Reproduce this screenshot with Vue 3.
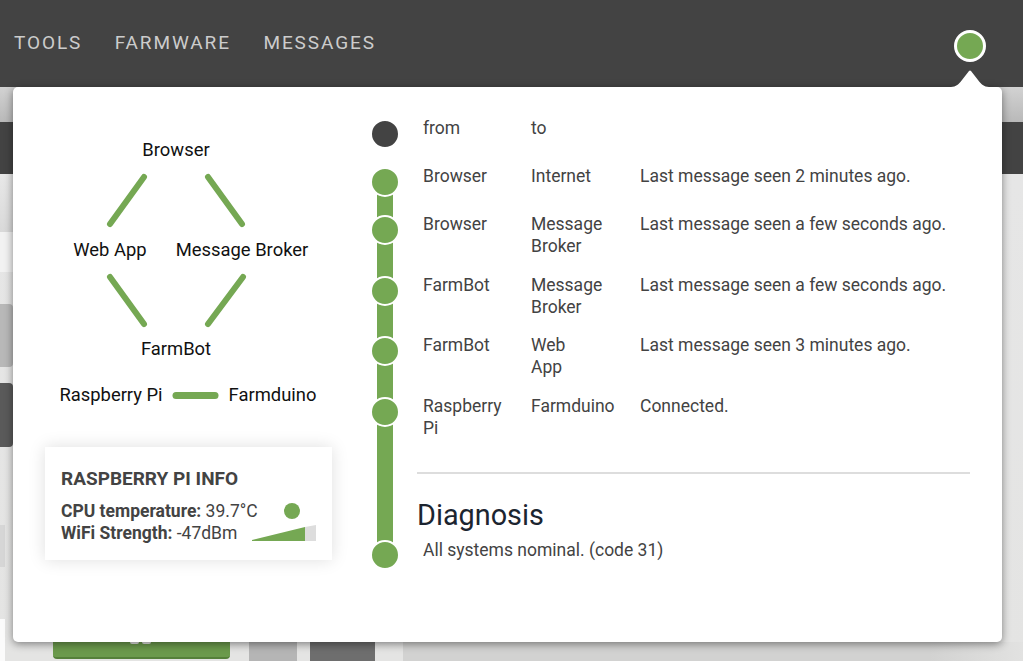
<script setup>
const rows = [
  { from: 'Browser', to: 'Internet', msg: 'Last message seen 2 minutes ago.' },
  { from: 'Browser', to: 'Message Broker', msg: 'Last message seen a few seconds ago.' },
  { from: 'FarmBot', to: 'Message Broker', msg: 'Last message seen a few seconds ago.' },
  { from: 'FarmBot', to: 'Web App', msg: 'Last message seen 3 minutes ago.' },
  { from: 'Raspberry Pi', to: 'Farmduino', msg: 'Connected.' },
]
</script>

<template>
  <div class="page">
    <header class="nav">
      <a>TOOLS</a>
      <a>FARMWARE</a>
      <a>MESSAGES</a>
      <span class="status"></span>
    </header>
    <div class="sub-a"></div>
    <div class="sub-b"></div>
    <div class="sub-rest">
      <i class="bg-left l1"></i>
      <i class="bg-left l2"></i>
      <i class="bg-left l3"></i>
      <i class="bg-left l4"></i>
      <i class="bg-left l5"></i>
      <i class="bg-left l6"></i>
      <i class="bg-bottom b1"><b class="nub"></b><b class="nub"></b></i>
      <i class="bg-bottom b2"></i>
      <i class="bg-bottom b3"></i>
      <i class="bg-bottom b4"></i>
    </div>

    <section class="popup">
      <svg class="arrow" width="40" height="20" viewBox="0 0 40 20">
        <path d="M1 19 C6 19 9 16 12 12 L19 3 Q20 2 21 3 L28 12 C31 16 34 19 39 19 L39 20 L1 20 Z" fill="#fff" />
      </svg>
      <div class="left">
        <div class="diagram">
          <svg class="links" width="320" height="300" viewBox="0 0 320 300">
            <g stroke="#75a853" stroke-width="6" stroke-linecap="round">
              <line x1="65" y1="132" x2="99" y2="85" />
              <line x1="163" y1="85" x2="197" y2="132" />
              <line x1="65" y1="185" x2="99" y2="232" />
              <line x1="163" y1="232" x2="198" y2="185" />
              <line x1="131" y1="303.5" x2="170" y2="303.5" stroke-width="7" />
            </g>
          </svg>
          <span class="node n1">Browser</span>
          <span class="node n2">Web App</span>
          <span class="node n3">Message Broker</span>
          <span class="node n4">FarmBot</span>
          <span class="node n5">Raspberry Pi</span>
          <span class="node n6">Farmduino</span>
        </div>
        <div class="card">
          <h4>RASPBERRY PI INFO</h4>
          <div class="info">
            <p><b>CPU temperature:</b> 39.7°C</p>
            <span class="temp"></span>
          </div>
          <div class="info">
            <p><b>WiFi Strength:</b> -47dBm</p>
            <svg width="64" height="16" viewBox="0 0 64 16">
              <path d="M53 2 L64 0 L64 16 L53 16 Z" fill="#ddd" />
              <path d="M0 15 L53 2 L53 16 L0 16 Z" fill="#75a853" />
            </svg>
          </div>
        </div>
      </div>

      <div class="right">
        <div class="track"></div>
        <div class="row">
          <span class="dot dark"></span>
          <span class="cell">from</span>
          <span class="cell">to</span>
          <span></span>
        </div>
        <div v-for="r in rows" :key="r.from + r.to" class="row">
          <span class="dot"></span>
          <span class="cell">{{ r.from }}</span>
          <span class="cell">{{ r.to }}</span>
          <span>{{ r.msg }}</span>
        </div>
        <hr />
        <h3>Diagnosis</h3>
        <div class="diag">
          <span class="dot last"></span>
          <span>All systems nominal. (code 31)</span>
        </div>
      </div>
    </section>
  </div>
</template>

<style>
html, body { margin: 0; overflow: hidden; }
</style>

<style scoped>
.page { position: relative; width: 1023px; height: 661px; overflow: hidden; background: #e6e6e5; font-family: Roboto, sans-serif; }
.nav { height: 87px; box-sizing: border-box; background: #434343; display: flex; align-items: center; gap: 32.5px; padding: 0 14px 2px; }
.nav a { color: #ccc; font-size: 19px; letter-spacing: 1.9px; }
.status { position: absolute; left: 954px; top: 30px; width: 32px; height: 32px; box-sizing: border-box; border: 3px solid #fff; border-radius: 50%; background: #75a853; }
.sub-a { height: 35px; background: linear-gradient(#d2d2d2, #b9b9b9); }
.sub-b { height: 52px; background: #434343; }
.sub-rest { position: relative; height: 487px; background: linear-gradient(#e6e6e6, #e4e4e3); }
.bg-left, .bg-bottom { position: absolute; display: block; }
.bg-left { left: 0; width: 13px; }
.l1 { top: 0; height: 58px; background: linear-gradient(#e8e8e8, #d9d9d9); }
.l2 { top: 58px; height: 40px; background: #f2f2f2; }
.l3 { top: 130px; height: 63px; background: #b8b8b8; border-radius: 0 4px 4px 0; }
.l4 { top: 209px; height: 64px; background: #5a5a5a; border-radius: 0 4px 4px 0; }
.l5 { top: 351px; height: 42px; width: 5px; background: #d6d6d6; }
.l6 { top: 445px; height: 42px; width: 5px; background: #fbfbfb; }
.bg-bottom { top: 468px; height: 19px; }
.b1 { left: 53px; width: 177px; height: 17px; background: #6b9a4c; border-bottom: 2px solid #55803a; border-radius: 0 0 4px 4px; box-sizing: border-box; display: flex; justify-content: center; gap: 3px; padding-right: 2px; }
.nub { width: 9px; height: 2px; background: #e4e4e4; border-radius: 0 0 5px 5px; }
.b2 { left: 249px; width: 48px; background: #b5b5b5; }
.b3 { left: 310px; width: 65px; background: #6e6e6e; }
.b4 { left: 403px; width: 620px; background: linear-gradient(90deg, #d2d2d1 85%, #e2e2e1); }
.popup { position: absolute; left: 13px; top: 87px; width: 989px; height: 555px; background: #fff; border-radius: 5px; box-shadow: 0 2px 8px rgba(0, 0, 0, .45); display: flex; color: #434343; font-size: 17.5px; line-height: 22px; }
.arrow { position: absolute; left: 937px; top: -19px; }
.left { width: 349px; flex: none; display: flex; flex-direction: column; }
.diagram { position: relative; height: 360px; color: #111; font-size: 18.4px; }
.links { position: absolute; left: 32px; top: 5px; overflow: visible; }
.node { position: absolute; transform: translateX(-50%); white-space: nowrap; margin-left: 32px; }
.n1 { left: 131px; top: 52px; }
.n2 { left: 65px; top: 152px; }
.n3 { left: 197px; top: 152px; }
.n4 { left: 131px; top: 251px; }
.n5 { left: 66px; top: 297px; }
.n6 { left: 227.5px; top: 297px; }
.card { margin-left: 32px; width: 287px; height: 113px; box-sizing: border-box; padding: 20px 16px 0; background: #fff; box-shadow: 0 0 16px rgba(0, 0, 0, .13); }
.card h4 { margin: 0 0 9px; font-size: 19px; line-height: 24px; font-weight: 700; }
.info { display: flex; justify-content: space-between; align-items: center; height: 22px; }
.info p { margin: 0; white-space: nowrap; }
.temp { width: 16px; height: 16px; border-radius: 50%; background: #75a853; margin-right: 16px; }
.right { position: relative; flex: 1; padding: 30px 32px 0 8px; }
.track { position: absolute; left: 15px; top: 95px; width: 16px; height: 373px; background: #75a853; }
.row { position: relative; box-sizing: border-box; min-height: 48px; display: grid; grid-template-columns: 53px 108px 109px 1fr; padding-bottom: 16.7px; }
.cell { width: 64px; }
.dot { position: relative; width: 30px; height: 30px; box-sizing: border-box; margin: 2px 0 -10px; border: 2px solid #fff; border-radius: 50%; background: #75a853; }
.dark { background: #434343; }
.last { margin-top: 1px; }
hr { margin: 16px 0 0 47px; border: 0; border-top: 2px solid #ddd; }
h3 { margin: 23px 0 0 47px; font-size: 28.8px; line-height: 36px; font-weight: 400; color: #1c2530; }
.diag { position: relative; display: grid; grid-template-columns: 53px 1fr; margin-top: 6px; height: 22px; }
</style>
